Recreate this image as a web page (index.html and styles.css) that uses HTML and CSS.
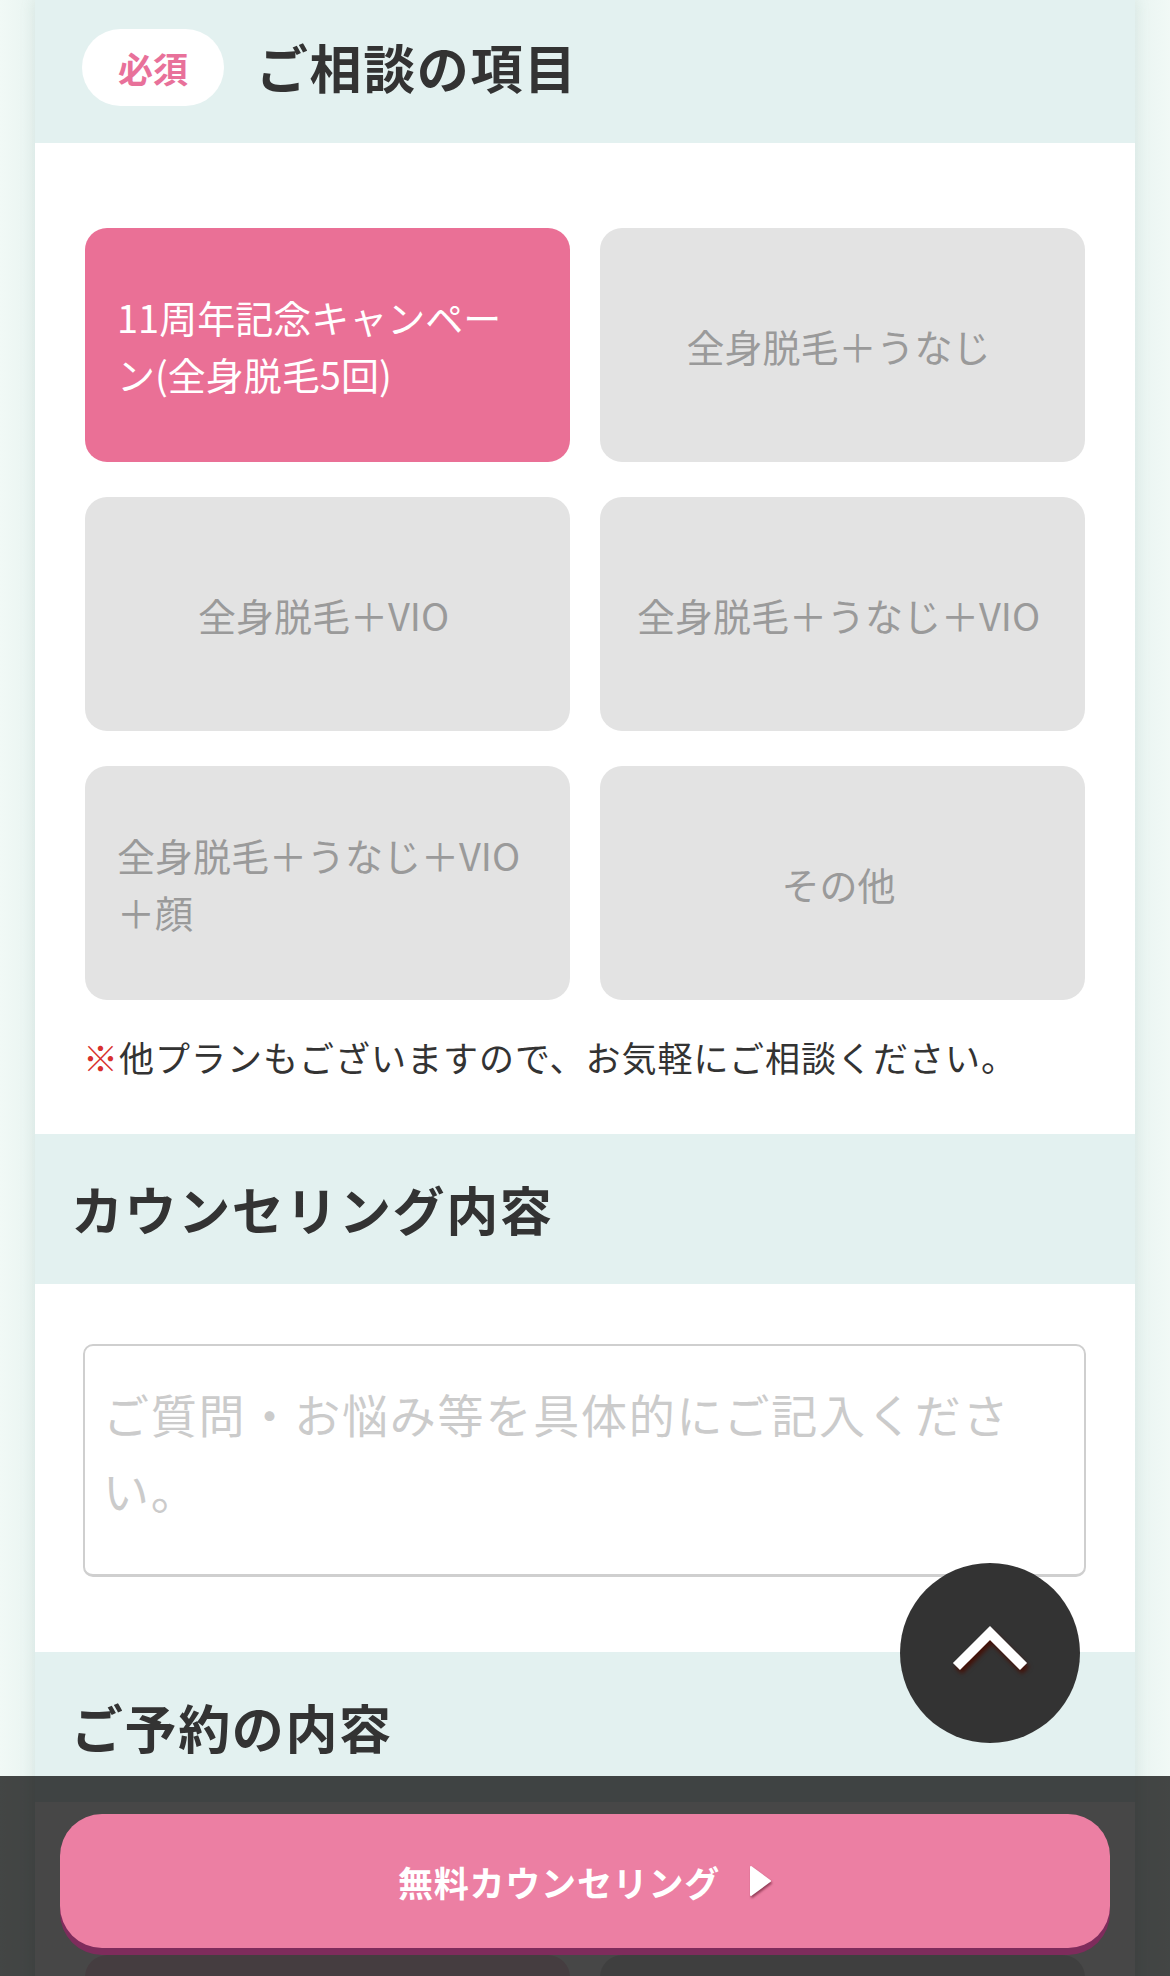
FILE: index.html
```html
<!DOCTYPE html>
<html lang="ja">
<head>
<meta charset="utf-8">
<title>ご相談の項目</title>
<link rel="stylesheet" href="styles.css">
</head>
<body>
<div class="page">
  <div class="card">
    <div class="sec-head sec-head--first">
      <span class="badge">必須</span>
      <h2 class="sec-title">ご相談の項目</h2>
    </div>
    <div class="sec-body">
      <div class="options">
        <div class="opt opt--on"><span>11周年記念キャンペーン(全身脱毛5回)</span></div>
        <div class="opt"><span>全身脱毛＋うなじ</span></div>
        <div class="opt"><span>全身脱毛＋VIO</span></div>
        <div class="opt"><span>全身脱毛＋うなじ＋VIO</span></div>
        <div class="opt"><span>全身脱毛＋うなじ＋VIO＋顔</span></div>
        <div class="opt"><span>その他</span></div>
      </div>
      <p class="note"><span class="mark">※</span>他プランもございますので、お気軽にご相談ください。</p>
    </div>

    <div class="sec-head">
      <h2 class="sec-title">カウンセリング内容</h2>
    </div>
    <div class="sec-body sec-body--text">
      <textarea class="memo" placeholder="ご質問・お悩み等を具体的にご記入ください。"></textarea>
    </div>

    <div class="sec-head">
      <h2 class="sec-title">ご予約の内容</h2>
    </div>
    <div class="sec-body sec-body--reserve">
      <div class="options">
        <div class="opt opt--soft"><span>予約</span></div>
        <div class="opt"><span>日程が決まっていない</span></div>
      </div>
    </div>
  </div>

  <button class="to-top" type="button" aria-label="ページトップへ">
    <svg class="chev" viewBox="0 0 80 50" width="80" height="50"><path d="M10 40 L40 10 L70 40" fill="none" stroke="#fff" stroke-width="10" stroke-linecap="square" stroke-linejoin="miter"/></svg>
  </button>

  <div class="cta-bar">
    <a class="cta" href="#">無料カウンセリング<svg class="tri" viewBox="0 0 24 32" width="24" height="32"><path d="M3 2 L22 16 L3 30 Z" fill="#fff" stroke="#fff" stroke-width="2" stroke-linejoin="round"/></svg></a>
  </div>
</div>
</body>
</html>
```

FILE: styles.css
```css
* { box-sizing: border-box; }
html, body { margin: 0; padding: 0; }
body {
  background: #eef7f4;
  font-family: "Noto Sans CJK JP", "Noto Sans", sans-serif;
  color: #333;
}
.page {
  position: relative;
  width: 1170px;
  height: 1976px;
  overflow: hidden;
  background: linear-gradient(90deg, #f1f9f6 0, #e9f4f1 35px, #e9f4f1 1135px, #f1f9f6 1170px);
}
.card {
  margin: 0 35px;
  width: 1100px;
  background: #fff;
  box-shadow: 0 0 14px rgba(120, 160, 150, 0.18);
}
.sec-head {
  background: #e3f1f0;
  height: 150px;
  display: flex;
  align-items: center;
  padding: 0 36px;
}
.sec-head--first {
  height: 143px;
  padding: 29px 0 37px 47px;
}
.badge {
  display: flex;
  align-items: center;
  justify-content: center;
  width: 142px;
  height: 77px;
  border-radius: 40px;
  background: #fff;
  color: #e8719a;
  font-weight: 700;
  font-size: 35px;
  margin-right: 32px;
}
.sec-title {
  margin: 0;
  font-size: 52px;
  font-weight: 700;
  line-height: 1.2;
  letter-spacing: 1.6px;
  color: #333;
}
.sec-body {
  padding: 85px 50px 0;
}
.options {
  display: grid;
  grid-template-columns: 1fr 1fr;
  gap: 35px 30px;
}
.opt {
  height: 234px;
  border-radius: 22px;
  background: #e3e3e3;
  color: #9a9a9a;
  display: flex;
  align-items: center;
  justify-content: center;
  padding: 0 40px 0 32px;
  font-size: 38px;
  line-height: 57px;
  text-align: left;
}
.opt--on {
  background: #ea7096;
  color: #fff;
}
.opt--soft {
  background: #f6dbe4;
}
.note {
  margin: 31px 0 0 -2px;
  padding-bottom: 51px;
  font-size: 35px;
  line-height: 52px;
  letter-spacing: 1px;
  color: #333;
}
.mark { color: #d8312d; }
.sec-body--text {
  padding: 60px 49px 75px 48px;
}
.memo {
  display: block;
  width: 1003px;
  height: 233px;
  border: 2px solid #cfcfcf;
  border-bottom-width: 3px;
  border-radius: 10px;
  padding: 29px 40px 10px 18px;
  font-family: "Noto Sans CJK JP", "Noto Sans", sans-serif;
  font-size: 46px;
  line-height: 76px;
  letter-spacing: 1.8px;
  resize: none;
  background: #fff;
  color: #333;
  outline: none;
}
.memo::placeholder { color: #cbcbcb; }
.sec-body--reserve {
  padding-top: 153px;
}
.to-top {
  position: absolute;
  left: 900px;
  top: 1563px;
  width: 180px;
  height: 180px;
  border-radius: 50%;
  border: 0;
  padding: 0;
  background: #333;
  display: flex;
  align-items: center;
  justify-content: center;
}
.chev {
  margin-top: -10px;
  filter: drop-shadow(2px 4px 2px rgba(70, 10, 0, 0.85));
}
.cta-bar {
  position: absolute;
  left: 0;
  right: 0;
  bottom: 0;
  height: 200px;
  background: rgba(0, 0, 0, 0.72);
  padding: 38px 60px 0;
}
.cta {
  display: flex;
  align-items: center;
  justify-content: center;
  gap: 28px;
  width: 1050px;
  height: 134px;
  border-radius: 42px;
  background: #ec7fa3;
  box-shadow: 0 7px 0 #7e2c5c;
  color: #fff;
  font-weight: 700;
  font-size: 35px;
  letter-spacing: 0.8px;
  text-decoration: none;
}
.tri {
  filter: drop-shadow(1px 2px 1px rgba(90, 20, 40, 0.6));
}
```
